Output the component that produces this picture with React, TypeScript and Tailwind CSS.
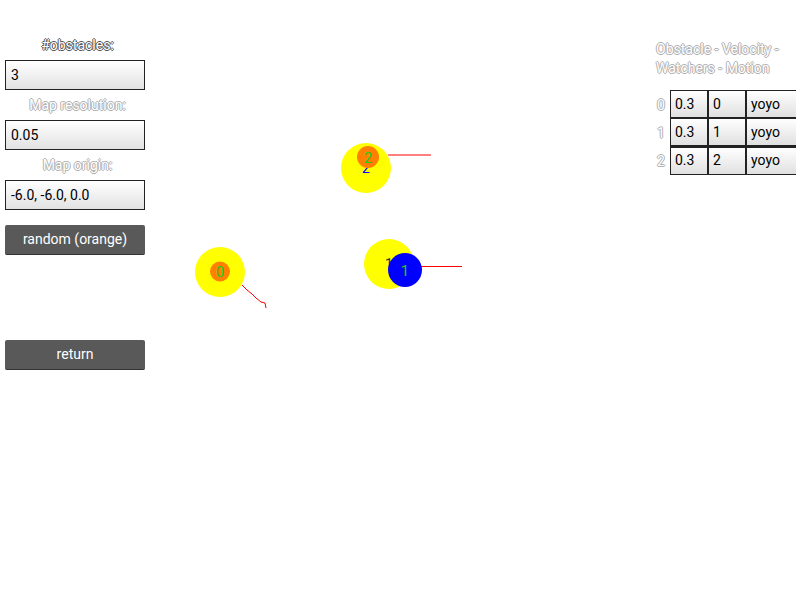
const outline = "text-white [text-shadow:-1px_0_0_#b0b0b0,1px_0_0_#b0b0b0,0_-1px_0_#b0b0b0,0_1px_0_#b0b0b0]"
const darkOutline = "text-white [text-shadow:-1px_0_0_#555,1px_0_0_#555,0_-1px_0_#555,0_1px_0_#555]"

function Label({ children, dark }: { children: React.ReactNode; dark?: boolean }) {
  return (
    <div className={`h-[30px] flex items-center justify-center text-[14px] ${dark ? darkOutline : outline}`}>
      {children}
    </div>
  )
}

function Field({ value }: { value: string }) {
  return (
    <div className="h-[30px] w-[140px] border border-[#222] bg-gradient-to-b from-white to-[#e2e2e2] flex items-center px-[5px] text-[14px] text-black">
      {value}
    </div>
  )
}

function Btn({ children }: { children: React.ReactNode }) {
  return (
    <button className="h-[30px] w-[140px] rounded-[2px] bg-[#595959] border-b border-[#333] text-white text-[14px] flex items-center justify-center">
      {children}
    </button>
  )
}

const rows = [
  { v: "0.3", w: "0", m: "yoyo" },
  { v: "0.3", w: "1", m: "yoyo" },
  { v: "0.3", w: "2", m: "yoyo" },
]

function Scene() {
  // viewBox in page coordinates (x offset 150)
  return (
    <svg className="flex-1 h-[600px]" viewBox="150 0 500 600" fontFamily="Roboto, sans-serif">
      {/* obstacle 2 */}
      <circle cx="366" cy="168" r="25" fill="#ffff00" />
      <text x="366" y="173" fontSize="14" fill="#0000ff" textAnchor="middle">2</text>
      <circle cx="368" cy="157" r="11" fill="#ff8000" />
      <text x="368" y="163" fontSize="15" fill="#22cc22" textAnchor="middle">2</text>
      <line x1="388" y1="155" x2="431" y2="155" stroke="#ff0000" strokeWidth="1" />
      {/* obstacle 1 */}
      <circle cx="389" cy="264" r="25" fill="#ffff00" />
      <text x="389" y="269" fontSize="14" fill="#333" textAnchor="middle">1</text>
      <line x1="420" y1="266.5" x2="462" y2="266.5" stroke="#ff0000" strokeWidth="1" />
      <circle cx="405" cy="270" r="17" fill="#0000ff" />
      <text x="405" y="276" fontSize="15" fill="#22cc22" textAnchor="middle">1</text>
      {/* obstacle 0 */}
      <circle cx="220" cy="272" r="25" fill="#ffff00" />
      <circle cx="220" cy="271.5" r="10" fill="#ff8000" />
      <text x="220" y="277" fontSize="15" fill="#22cc22" textAnchor="middle">0</text>
      <polyline points="242,285 247,290 252,294 256,298 261,302 265,303 266,308" fill="none" stroke="#ff0000" strokeWidth="1" />
    </svg>
  )
}

export default function App() {
  return (
    <div className="w-[800px] h-[600px] bg-white flex font-['Roboto',sans-serif] overflow-hidden">
      <div className="w-[150px] pl-[5px] pt-[30px] flex flex-col">
        <Label dark>#obstacles:</Label>
        <Field value="3" />
        <Label>Map resolution:</Label>
        <Field value="0.05" />
        <Label>Map origin:</Label>
        <Field value="-6.0, -6.0, 0.0" />
        <div className="h-[15px]" />
        <Btn>random (orange)</Btn>
        <div className="h-[85px]" />
        <Btn>return</Btn>
      </div>
      <Scene />
      <div className="w-[150px] pt-[40px] flex flex-col">
        <div className={`pl-[6px] text-[14px] leading-[19px] ${outline}`}>
          Obstacle - Velocity -<br />Watchers - Motion
        </div>
        <div className="mt-[12px] flex">
          <div className="w-[20px] flex flex-col pt-[1px]">
            {rows.map((_, i) => (
              <div key={i} className={`h-[28px] flex items-center pl-[7px] text-[14px] ${outline}`}>{i}</div>
            ))}
          </div>
          <div className="grid grid-cols-[36px_36px_49px] gap-[2px] p-[1px] bg-[#222] w-[126px]">
            {rows.map((r, i) => (
              [r.v, r.w, r.m].map((c, j) => (
                <div key={`${i}-${j}`} className="h-[26px] bg-gradient-to-b from-white to-[#e0e0e0] flex items-center px-[4px] text-[14px] text-black">
                  {c}
                </div>
              ))
            ))}
          </div>
        </div>
      </div>
    </div>
  )
}
